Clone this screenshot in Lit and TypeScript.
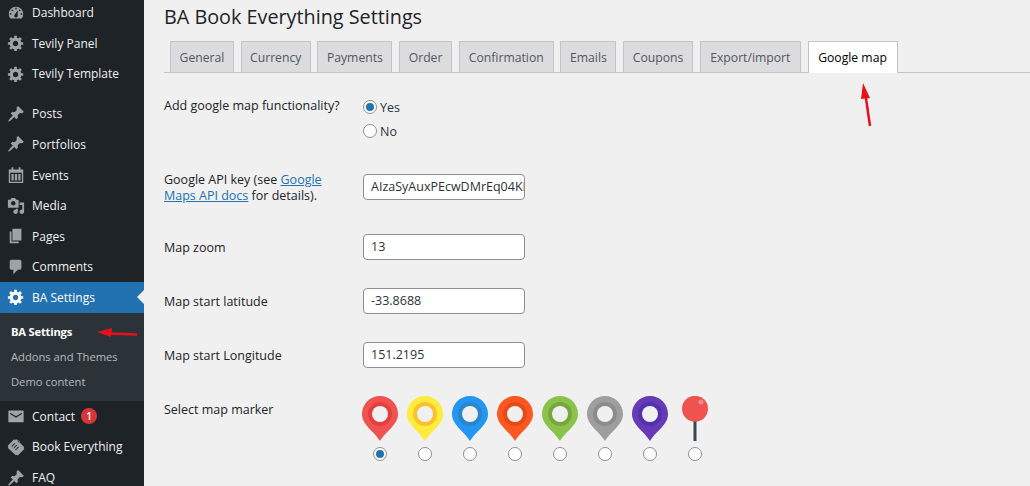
import { LitElement, html, css } from "lit";
import { customElement } from "lit/decorators.js";

const GEAR = "M18 12h-2.18c-.17.7-.44 1.35-.81 1.93l1.54 1.54-2.1 2.1-1.54-1.54c-.58.36-1.23.63-1.91.79V19H8v-2.18c-.68-.16-1.33-.43-1.91-.79l-1.54 1.54-2.12-2.12 1.54-1.54c-.36-.58-.63-1.23-.79-1.91H1V9.03h2.17c.16-.7.44-1.35.8-1.94L2.43 5.55l2.1-2.1 1.54 1.54c.58-.37 1.24-.64 1.93-.81V2h3v2.18c.68.16 1.33.43 1.91.79l1.54-1.54 2.12 2.12-1.54 1.54c.36.59.64 1.24.8 1.94H18V12zm-8.5 1.5c1.66 0 3-1.34 3-3s-1.34-3-3-3-3 1.34-3 3 1.34 3 3 3z";
const PIN = "M10.44 3.02l1.82-1.82 6.36 6.35-1.83 1.82c-1.05-.68-2.48-.57-3.41.36l-.75.75c-.92.93-1.04 2.35-.35 3.41l-1.83 1.82-2.41-2.41-2.8 2.79c-.42.42-3.38 2.71-3.8 2.29s1.86-3.39 2.28-3.81l2.79-2.79L4.1 9.36l1.83-1.82c1.05.69 2.48.57 3.4-.36l.75-.75c.93-.92 1.05-2.35.36-3.41z";
const ICONS: Record<string, string> = {
  dashboard: "M3.76 16h12.48c1.1-1.37 1.76-3.11 1.76-5 0-4.42-3.58-8-8-8s-8 3.58-8 8c0 1.89.66 3.63 1.76 5zM10 4c.55 0 1 .45 1 1s-.45 1-1 1-1-.45-1-1 .45-1 1-1zM6 6c.55 0 1 .45 1 1s-.45 1-1 1-1-.45-1-1 .45-1 1-1zm8 0c.55 0 1 .45 1 1s-.45 1-1 1-1-.45-1-1 .45-1 1-1zm-5.37 5.55L12 7v6c0 1.1-.9 2-2 2s-2-.9-2-2c0-.57.24-1.08.63-1.45zM4 10c.55 0 1 .45 1 1s-.45 1-1 1-1-.45-1-1 .45-1 1-1zm12 0c.55 0 1 .45 1 1s-.45 1-1 1-1-.45-1-1 .45-1 1-1z",
  gear: GEAR,
  pin: PIN,
  calendar: "M5 1.500h2V4h6V1.500h2V4h3v15H2V4h3V1.500zM3.500 7.500V17.500h13V7.500h-13zM5 9h2.500v7H5V9zm3.750 0h2.500v7h-2.500V9zM12.500 9H15v7h-2.500V9z",
  media: "M13 11V4c0-.55-.45-1-1-1h-1.67L9 1H5L3.67 3H2c-.55 0-1 .45-1 1v7c0 .55.45 1 1 1h10c.55 0 1-.45 1-1zM7 4.500c1.380 0 2.500 1.120 2.500 2.500S8.380 9.500 7 9.500 4.500 8.380 4.500 7 5.620 4.500 7 4.500zM14 6h5v10.500c0 1.380-1.120 2.500-2.500 2.500S14 17.880 14 16.500s1.120-2.500 2.500-2.500c.17 0 .34.020.5.050V9h-3V6zm-4 8.050V13h2v3.500c0 1.380-1.120 2.500-2.500 2.500S7 17.880 7 16.500 8.120 14 9.500 14c.17 0 .34.020.5.050z",
  pages: "M6 15V2h10v13H6zm-1 1h8v2H3V5h2v11z",
  comment: "M5 2h9c1.100 0 2 .9 2 2v7c0 1.100-.9 2-2 2h-2l-5 5v-5H5c-1.100 0-2-.9-2-2V4c0-1.100.9-2 2-2z",
  mail: "M2.500 4h15c.55 0 1 .45 1 1v11c0 .55-.45 1-1 1h-15c-.55 0-1-.45-1-1V5c0-.55.45-1 1-1zM3.500 6.300v1.600l6.500 4 6.500-4V6.300l-6.500 4-6.500-4z",
  tag: "M10.500 1.500l8.500 8.500-.5 1.500.8.800-7.300 7.200-.8-.8-1.500.5L1 11l.5-1.500-.8-.8L8 1.500l.8.800 1.700-.8zM8.500 5.500L5 9l.7.700 3.500-3.500-.7-.7zm2 2L7 11l.7.700 3.500-3.500-.7-.7zm2 2L9 13l.7.700 3.500-3.500-.7-.7zM12 3.800a1 1 0 1 0 2 0 1 1 0 0 0-2 0z",
};

type Item = { label: string; icon: string; gapBefore?: boolean; current?: boolean; badge?: string };
const MENU_TOP: Item[] = [
  { label: "Dashboard", icon: "dashboard" },
  { label: "Tevily Panel", icon: "gear" },
  { label: "Tevily Template", icon: "gear" },
  { label: "Posts", icon: "pin", gapBefore: true },
  { label: "Portfolios", icon: "pin" },
  { label: "Events", icon: "calendar" },
  { label: "Media", icon: "media" },
  { label: "Pages", icon: "pages" },
  { label: "Comments", icon: "comment" },
  { label: "BA Settings", icon: "gear", current: true },
];
const MENU_BOTTOM: Item[] = [
  { label: "Contact", icon: "mail", badge: "1" },
  { label: "Book Everything", icon: "tag" },
  { label: "FAQ", icon: "pin" },
];
const TABS = ["General", "Currency", "Payments", "Order", "Confirmation", "Emails", "Coupons", "Export/import", "Google map"];
const MARKERS = [
  ["#ef5350", "#e53e3e"],
  ["#ffeb3b", "#fbc02d"],
  ["#2196f3", "#2a86c8"],
  ["#ff5722", "#e64a19"],
  ["#8bc34a", "#78a63e"],
  ["#9e9e9e", "#8c8c8c"],
  ["#673ab7", "#5331ad"],
];

@customElement("app-root")
export class AppRoot extends LitElement {
  static styles = css`
    :host {
      display: flex;
      width: 1030px;
      height: 486px;
      overflow: hidden;
      background: #f0f0f1;
      font-family: "Open Sans", "Noto Sans", sans-serif;
      font-size: 12.5px;
      color: #2c3338;
      position: relative;
    }
    .side {
      width: 144px;
      flex: none;
      background: #1d2327;
      color: #f0f0f1;
      font-size: 12px;
    }
    .menu { margin-top: -2.6px; display: flex; flex-direction: column; }
    .item {
      height: 30.6px;
      display: flex;
      align-items: center;
      flex: none;
      position: relative;
    }
    .item.gap { margin-top: 9.4px; }
    .item svg { width: 18px; height: 18px; margin-left: 7px; margin-right: 7px; fill: #9ea3a8; flex: none; }
    .item.current { background: #2271b1; color: #fff; }
    .item.current svg { fill: #fff; }
    .item.current::after {
      content: "";
      position: absolute;
      right: 0;
      top: 8px;
      border: 7px solid transparent;
      border-right-color: #f0f0f1;
      border-left-width: 0;
    }
    .badge {
      width: 16px;
      height: 16px;
      border-radius: 50%;
      background: #d63638;
      color: #fff;
      font-size: 10px;
      font-weight: 600;
      display: flex;
      align-items: center;
      justify-content: center;
      margin-left: 6px;
    }
    .sub {
      background: #2c3338;
      padding: 6px 0 7.3px 11px;
      color: #b4b9be;
      font-size: 11.2px;
    }
    .sub div { height: 25px; line-height: 25px; }
    .sub .on { color: #fff; font-weight: 700; letter-spacing: -0.2px; }
    .main { flex: 1; min-width: 0; padding-left: 20px; }
    h1 {
      margin: 0;
      font-size: 19.8px;
      font-weight: 400;
      color: #1d2327;
      line-height: 28px;
      padding-top: 3px;
      height: 38px;
      box-sizing: border-box;
    }
    .tabs {
      display: grid;
      grid-template-columns: 64px 70px 75px 53px 95px 56px 70px 101px 90px;
      column-gap: 6.7px;
      margin-top: 3px;
      padding-left: 6px;
      border-bottom: 1px solid #c3c4c7;
      height: 31px;
      font-size: 12.2px;
    }
    .tab {
      height: 31px;
      box-sizing: border-box;
      border: 1px solid #c3c4c7;
      border-bottom: 0;
      background: #dcdcde;
      color: #50575e;
      display: flex;
      align-items: center;
      justify-content: center;
      white-space: nowrap;
      font-weight: 500;
    }
    .tab.on { background: #fff; color: #000; height: 32px; }
    .row { display: grid; grid-template-columns: 199px 1fr; }
    .row .t { line-height: 16px; color: #1d2327; }
    .r1 { margin-top: 24px; height: 77px; }
    .r1 .t { padding-top: 1px; }
    .radio {
      width: 14px;
      height: 14px;
      border: 1px solid #8c8f94;
      border-radius: 50%;
      background: #fff;
      box-sizing: border-box;
      display: flex;
      align-items: center;
      justify-content: center;
      flex: none;
    }
    .radio.on::before { content: ""; width: 8px; height: 8px; border-radius: 50%; background: #2271b1; }
    .opt { display: flex; align-items: center; gap: 3px; height: 24px; }
    .opts { margin-top: -2px; }
    .r2 { height: 60px; }
    .r2 .t { margin-top: -2px; display: block; }
    .r2 a { color: #2271b1; text-decoration: underline; }
    .rf { height: 54px; }
    .rf .t { padding-top: 6px; }
    .input {
      width: 162px;
      height: 26px;
      box-sizing: border-box;
      border: 1px solid #8c8f94;
      border-radius: 4px;
      background: #fff;
      padding: 0 7px;
      line-height: 24px;
      overflow: hidden;
      white-space: nowrap;
      color: #2c3338;
    }
    .rm .t { padding-top: 6px; }
    .markers { display: flex; gap: 9px; margin-left: -1px; }
    .marker { width: 36px; display: flex; flex-direction: column; align-items: center; gap: 6px; }
    .marker svg { display: block; width: 36px; height: 45px; }
    .over { position: absolute; left: 0; top: 0; pointer-events: none; }
  `;

  private renderItem(it: Item) {
    return html`<div class="item ${it.gapBefore ? "gap" : ""} ${it.current ? "current" : ""}">
      <svg viewBox="0 0 20 20"><path fill-rule="evenodd" d=${ICONS[it.icon]}></path></svg>
      <span>${it.label}</span>
      ${it.badge ? html`<span class="badge">${it.badge}</span>` : ""}
    </div>`;
  }

  private pin(fill: string, ring: string) {
    return html`<svg viewBox="0 0 36 45">
      <path fill=${fill} d="M18 0C8 0 0 8 0 18c0 11 12 17 18 27 6-10 18-16 18-27C36 8 28 0 18 0z"></path>
      <circle cx="18" cy="18" r="12" fill=${ring}></circle>
      <circle cx="18" cy="18" r="8" fill="#f0f0f1"></circle>
    </svg>`;
  }

  render() {
    return html`
      <nav class="side">
        <div class="menu">
          ${MENU_TOP.map((i) => this.renderItem(i))}
          <div class="sub">
            <div class="on">BA Settings</div>
            <div>Addons and Themes</div>
            <div>Demo content</div>
          </div>
          ${MENU_BOTTOM.map((i) => this.renderItem(i))}
        </div>
      </nav>
      <main class="main">
        <h1>BA Book Everything Settings</h1>
        <div class="tabs">
          ${TABS.map((t, i) => html`<div class="tab ${i === TABS.length - 1 ? "on" : ""}">${t}</div>`)}
        </div>
        <div class="row r1">
          <label class="t">Add google map functionality?</label>
          <div class="opts">
            <div class="opt"><span class="radio on"></span>Yes</div>
            <div class="opt"><span class="radio"></span>No</div>
          </div>
        </div>
        <div class="row r2">
          <label class="t">Google API key (see <a>Google<br />Maps API docs</a> for details).</label>
          <div class="input">AIzaSyAuxPEcwDMrEq04KI</div>
        </div>
        <div class="row rf"><label class="t">Map zoom</label><div class="input">13</div></div>
        <div class="row rf"><label class="t">Map start latitude</label><div class="input">-33.8688</div></div>
        <div class="row rf"><label class="t">Map start Longitude</label><div class="input">151.2195</div></div>
        <div class="row rm">
          <label class="t">Select map marker</label>
          <div class="markers">
            ${MARKERS.map(
              ([f, r], i) => html`<div class="marker">${this.pin(f, r)}<span class="radio ${i === 0 ? "on" : ""}"></span></div>`
            )}
            <div class="marker">
              <svg viewBox="0 0 36 45">
                <rect x="16.500" y="20" width="3" height="25" fill="#37474f"></rect>
                <circle cx="18" cy="12.800" r="13" fill="#ef5350"></circle>
                <circle cx="24" cy="6" r="2.500" fill="#f28b88"></circle>
              </svg>
              <span class="radio"></span>
            </div>
          </div>
        </div>
      </main>
      <svg class="over" width="1030" height="486" viewBox="0 0 1030 486">
        <path d="M137 334.500 L110 333.500" stroke="#e8101c" stroke-width="2.500" fill="none"></path>
        <path d="M97 332 L112 328 L111 337 Z" fill="#e8101c"></path>
        <path d="M870 126 L865.500 95" stroke="#e8101c" stroke-width="2.500" fill="none"></path>
        <path d="M863 83 L870 98 L861 99 Z" fill="#e8101c"></path>
      </svg>
    `;
  }
}
